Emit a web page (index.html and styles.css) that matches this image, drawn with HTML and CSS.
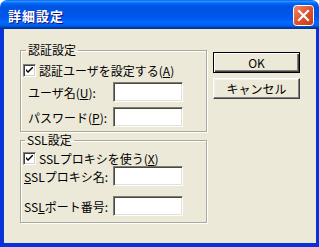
FILE: index.html
```html
<!DOCTYPE html>
<html lang="ja">
  <head>
    <meta charset="UTF-8" />
    <title>詳細設定</title>
    <link rel="stylesheet" href="styles.css">
  </head>
  <body>
    <div class="window">
      <div class="titlebar">
        <span class="title">詳細設定</span>
        <span class="close">
          <svg width="21" height="21" viewBox="0 0 21 21">
            <defs>
              <linearGradient id="red" x1="0" y1="0" x2="1" y2="1">
                <stop offset="0" stop-color="#f08a6c" />
                <stop offset="0.5" stop-color="#e0532d" />
                <stop offset="1" stop-color="#c33b12" />
              </linearGradient>
            </defs>
            <rect x="0.5" y="0.5" width="20" height="20" rx="3" fill="url(#red)" stroke="#fff" />
            <path d="M6 6 L15 15 M15 6 L6 15" stroke="#fff" stroke-width="2.2" stroke-linecap="square" />
          </svg>
        </span>
      </div>

      <div class="client">
        <div class="groups">
          <fieldset class="group group-auth">
            <legend>認証設定</legend>
            <div class="check-row">
              <span class="checkbox">
                <svg width="7" height="7" viewBox="0 0 7 7"><path d="M0 2 L0 4 L2 6 L7 1 L7 -1 L2 4 Z" fill="#000" /></svg>
              </span>
              <span>認証ユーザを設定する(<u>A</u>)</span>
            </div>
            <div class="field-row">
              <span class="field-label">ユーザ名(<u>U</u>):</span>
              <span class="textbox"></span>
            </div>
            <div class="field-row">
              <span class="field-label">パスワード(<u>P</u>):</span>
              <span class="textbox"></span>
            </div>
          </fieldset>

          <fieldset class="group group-ssl">
            <legend>SSL設定</legend>
            <div class="check-row">
              <span class="checkbox">
                <svg width="7" height="7" viewBox="0 0 7 7"><path d="M0 2 L0 4 L2 6 L7 1 L7 -1 L2 4 Z" fill="#000" /></svg>
              </span>
              <span>SSLプロキシを使う(<u>X</u>)</span>
            </div>
            <div class="field-row">
              <span class="field-label"><u>S</u>SLプロキシ名:</span>
              <span class="textbox"></span>
            </div>
            <div class="field-row field-row-port">
              <span class="field-label">SS<u>L</u>ポート番号:</span>
              <span class="textbox"></span>
            </div>
          </fieldset>
        </div>

        <div class="buttons">
          <div class="btn btn-default">OK</div>
          <div class="btn">キャンセル</div>
        </div>
      </div>
    </div>
  </body>
</html>
```

FILE: styles.css
```css
html {
  font-family: "Noto Sans CJK JP", "Noto Sans", sans-serif;
  font-size: 12px;
}

body {
  margin: 0;
  background-color: #fff;
}

.window {
  width: 319px;
  height: 247px;
  display: flex;
  flex-direction: column;
}

.titlebar {
  height: 29px;
  flex: none;
  display: flex;
  align-items: center;
  padding: 0 5px 0 8px;
  border-radius: 7px 7px 0 0;
  background: linear-gradient(to bottom,
    #0058ee 0%, #3593ff 4%, #288eff 6%, #127dff 8%, #036ffc 10%,
    #0262ee 14%, #0057e5 20%, #0054e3 24%, #0055eb 56%, #005bf5 66%,
    #026afe 76%, #0062ef 86%, #0052d6 92%, #0040ab 94%, #003092 100%);
  box-sizing: border-box;
}

.title {
  flex: 1;
  color: #fff;
  font-weight: bold;
  font-size: 13px;
  letter-spacing: 1px;
  text-shadow: 1px 1px #0f1089;
  line-height: 15px;
  margin-top: 1px;
}

.close {
  width: 21px;
  height: 21px;
  display: block;
  margin-top: 1px;
}

.close svg {
  display: block;
}

.client {
  flex: 1;
  display: flex;
  background-color: #ece9d8;
  border-left: 3px solid #0831d9;
  border-right: 3px solid #0831d9;
  border-bottom: 4px solid #0831d9;
  box-shadow: inset 1px 0 #0a3ad0;
  color: #000;
}

.groups {
  padding: 14px 0 0 17px;
}

.group {
  width: 187px;
  box-sizing: border-box;
  margin: 0;
  padding: 0 23px 4px 2px;
  border: 1px solid #aca899;
  border-radius: 0;
  box-shadow: inset 1px 1px #fff, 1px 1px #fff;
  min-inline-size: 0;
}

.group legend {
  margin-left: 3px;
  padding: 0 2px;
  line-height: 14px;
}

.group-ssl {
  margin-top: 1px;
  padding-bottom: 6px;
}

.group-ssl legend {
  margin-left: 2px;
}

.check-row {
  display: flex;
  align-items: center;
  height: 13px;
  margin-top: 7px;
  gap: 3px;
  white-space: nowrap;
}

.group-ssl .check-row {
  margin-top: 5px;
}

.checkbox {
  width: 13px;
  height: 13px;
  box-sizing: border-box;
  display: flex;
  align-items: center;
  justify-content: center;
  background-color: #fff;
  border: 1px solid;
  border-color: #808080 #fff #fff #808080;
  box-shadow: inset 1px 1px #404040, inset -1px -1px #d4d0c8;
  flex: none;
}

.checkbox svg {
  display: block;
}

.field-row {
  display: flex;
  align-items: center;
  height: 20px;
  margin-top: 5px;
  padding-left: 5px;
  white-space: nowrap;
}

.group-ssl .field-row {
  margin-top: 1px;
  padding-left: 1px;
}

.group-ssl .field-row-port {
  margin-top: 10px;
}

.field-label {
  flex: 1;
}

.textbox {
  width: 70px;
  height: 20px;
  box-sizing: border-box;
  background-color: #fff;
  border: 1px solid;
  border-color: #7f7d73 #fff #fff #7f7d73;
  box-shadow: inset 1px 1px #4a483f, inset -1px -1px #e4e1d2;
}

.buttons {
  padding: 23px 0 0 6px;
  display: flex;
  flex-direction: column;
  gap: 5px;
}

.btn {
  width: 87px;
  height: 21px;
  box-sizing: border-box;
  display: flex;
  align-items: center;
  justify-content: center;
  border: 1px solid;
  border-color: #fff #404040 #404040 #fff;
  box-shadow: inset -1px -1px #808080, inset 1px 1px #f4f3ee;
  background-color: #ece9d8;
}

.btn-default {
  border: 1px solid #000;
  box-shadow: inset 1px 1px #fff, inset -1px -1px #404040, inset -2px -2px #808080;
}
```
